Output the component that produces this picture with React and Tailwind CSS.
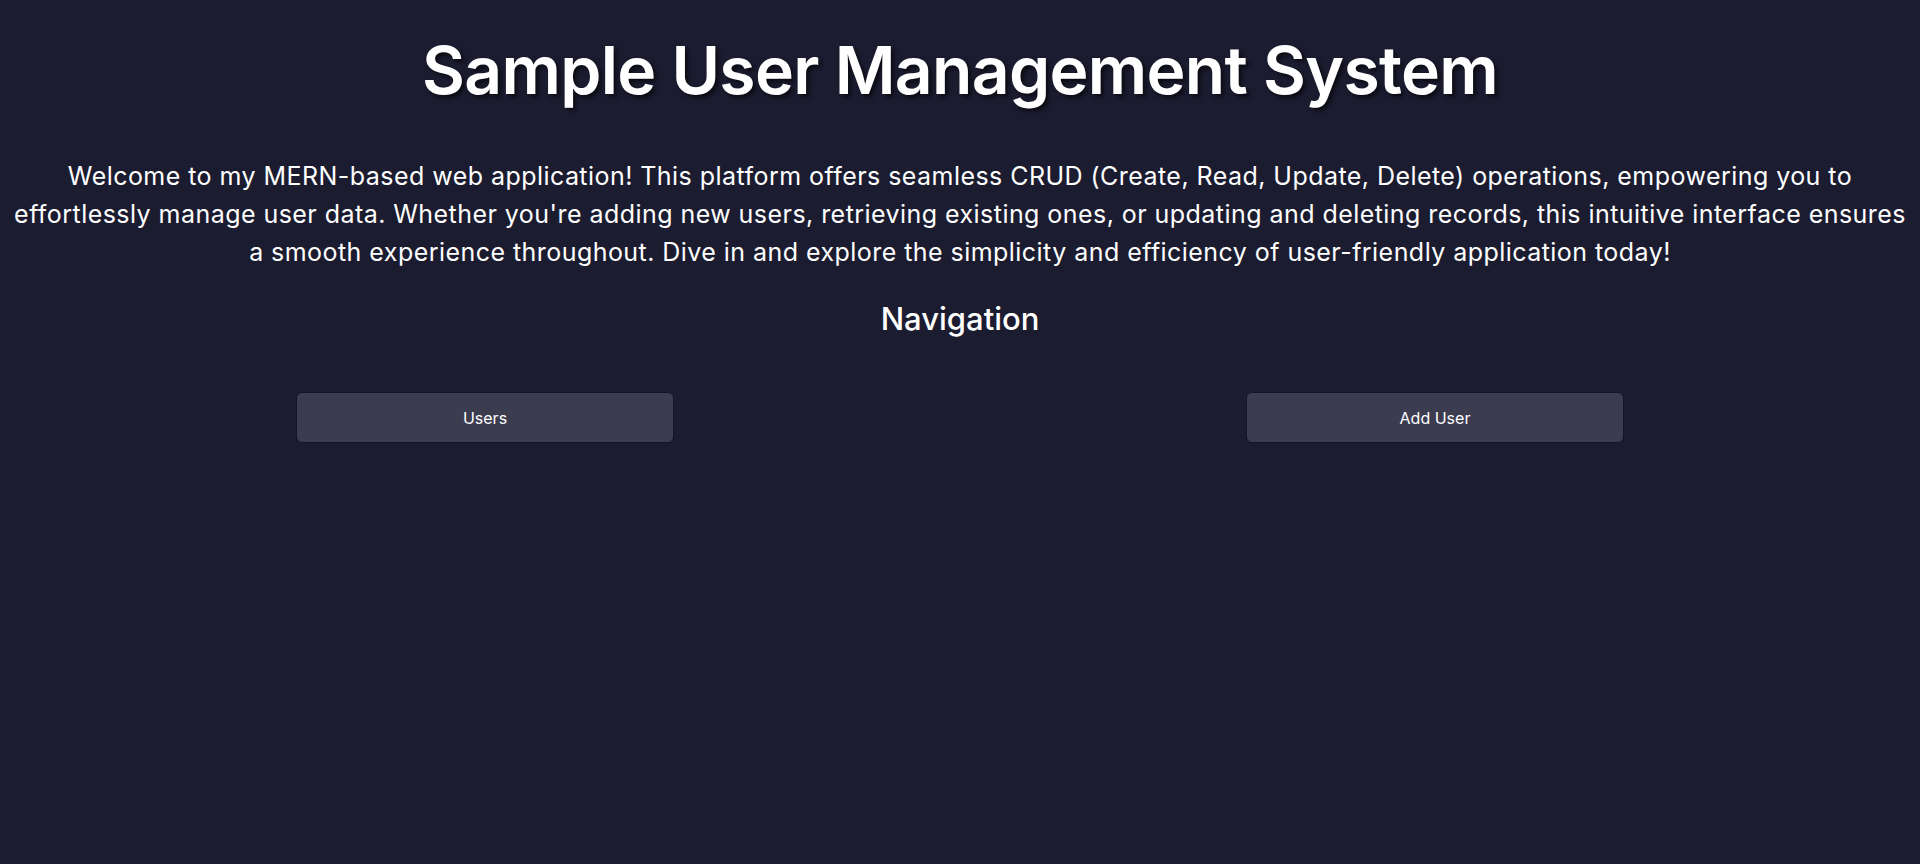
export default function App() {
  return (
    <div className="min-h-screen bg-[#1c1c31] px-[10px] text-white font-['Inter','Noto_Sans',sans-serif]">
      <h1 className="pt-[30px] text-center text-[66px] font-semibold leading-[80px] tracking-[-0.7px] [text-shadow:3px_3px_4px_rgba(0,0,0,0.6)]">
        Sample User Management System
      </h1>

      <p className="mt-[47px] text-center text-[25px] leading-[38px] font-normal tracking-[0.45px]">
        Welcome to my MERN-based web application! This platform offers seamless CRUD (Create, Read, Update, Delete) operations, empowering you to<br />
        effortlessly manage user data. Whether you're adding new users, retrieving existing ones, or updating and deleting records, this intuitive interface ensures<br />
        a smooth experience throughout. Dive in and explore the simplicity and efficiency of user-friendly application today!
      </p>

      <h2 className="mt-[26px] text-center text-[31px] leading-[44px] font-medium">Navigation</h2>

      <nav className="mt-[51px] grid grid-cols-2">
        <div className="flex justify-center">
          <button className="w-[378px] h-[51px] rounded-md bg-[#3c3c50] border border-[#15152a] text-[16px] text-white">
            Users
          </button>
        </div>
        <div className="flex justify-center">
          <button className="w-[378px] h-[51px] rounded-md bg-[#3c3c50] border border-[#15152a] text-[16px] text-white">
            Add User
          </button>
        </div>
      </nav>
    </div>
  )
}
